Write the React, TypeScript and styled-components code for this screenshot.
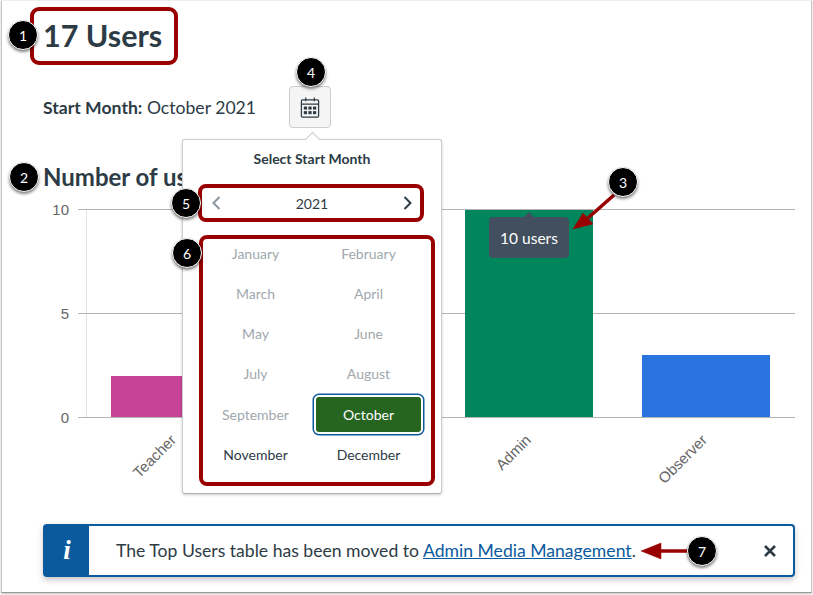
import React from 'react';
import styled, { createGlobalStyle } from 'styled-components';

const GlobalStyle = createGlobalStyle`
	html, body {
		margin: 0;
		padding: 0;
		background: #ffffff;
	}
	* {
		box-sizing: border-box;
	}
`;

const Page = styled.div`
	position: relative;
	width: 813px;
	height: 595px;
	overflow: hidden;
	background: #ffffff;
	color: #2d3b45;
	font-family: Lato, 'Noto Sans', sans-serif;
`;

const Frame = styled.div`
	width: 811px;
	height: 593px;
	margin-left: 1px;
	padding: 6px 16px 0 41px;
	border: 1px solid #c8c8c8;
	border-top-color: #ededed;
	border-bottom-color: #9a9a9a;
	background: #ffffff;
	box-shadow: 0 1px 2px rgba(0, 0, 0, 0.25);
`;

const TitleBox = styled.div`
	display: flex;
	align-items: center;
	width: 148px;
	height: 58px;
	margin-left: -13px;
	padding: 0 0 2px 9px;
	border: 4px solid #990000;
	border-radius: 9px;
`;

const Title = styled.h1`
	margin: 0;
	font-size: 30.5px;
	font-weight: 700;
	line-height: 40px;
	white-space: nowrap;
`;

const StartRow = styled.div`
	display: flex;
	align-items: center;
	gap: 33px;
	height: 42px;
	margin-top: 21px;
	font-size: 17.6px;
`;

const StartLabel = styled.div`
	white-space: nowrap;
	b {
		font-weight: 700;
	}
`;

const CalendarButton = styled.button`
	display: flex;
	align-items: center;
	justify-content: center;
	width: 42px;
	height: 42px;
	padding: 0;
	border: 1px solid #c7cdd1;
	border-radius: 4px;
	background: #f5f5f5;
	color: #2d3b45;
`;

const SubTitle = styled.h2`
	margin: 34px 0 0;
	font-size: 24px;
	font-weight: 700;
	line-height: 30px;
	white-space: nowrap;
`;

const ChartArea = styled.div`
	position: relative;
	width: 752px;
	height: 329px;
	margin-top: 3px;
`;

const ChartSvg = styled.svg`
	display: block;
`;

const Tooltip = styled.div`
	position: absolute;
	left: 446px;
	top: 22px;
	display: flex;
	align-items: center;
	justify-content: center;
	width: 80px;
	height: 41px;
	border-radius: 4px;
	background: #414f5e;
	color: #ffffff;
	font-size: 15.5px;

	&::before {
		content: '';
		position: absolute;
		left: 35px;
		top: -5px;
		border-left: 5px solid transparent;
		border-right: 5px solid transparent;
		border-bottom: 5px solid #414f5e;
	}
`;

const Alert = styled.div`
	display: flex;
	align-items: stretch;
	width: 752px;
	height: 53px;
	border: 2px solid #0b5a9e;
	border-radius: 4px;
	background: #ffffff;
	box-shadow: 0 3px 6px rgba(0, 0, 0, 0.22);
`;

const AlertIcon = styled.div`
	display: flex;
	align-items: center;
	justify-content: center;
	flex: 0 0 44px;
	background: #0b5a9e;
	color: #ffffff;
	font-family: 'Liberation Serif', serif;
	font-size: 27px;
	font-style: italic;
	font-weight: 700;
`;

const AlertBody = styled.div`
	flex: 1;
	display: flex;
	align-items: center;
	padding-left: 27px;
	font-size: 17.6px;
	white-space: nowrap;
`;

const AlertLink = styled.a`
	color: #0b5a9e;
	text-decoration: underline;
`;

const CloseButton = styled.div`
	display: flex;
	align-items: center;
	margin-right: 17px;
	color: #2d3b45;
`;

const Popover = styled.div`
	position: absolute;
	left: 182px;
	top: 139px;
	width: 260px;
	height: 355px;
	padding: 0 8px 0 15px;
	border: 1px solid #c7cdd1;
	border-bottom-color: #a9aeb2;
	border-radius: 3px;
	background: #ffffff;
	box-shadow: 0 1px 3px rgba(0, 0, 0, 0.2);

	&::before {
		content: '';
		position: absolute;
		left: 124px;
		top: -6px;
		width: 10px;
		height: 10px;
		border-left: 1px solid #c7cdd1;
		border-top: 1px solid #c7cdd1;
		background: #ffffff;
		transform: rotate(45deg);
	}
`;

const PopoverTitle = styled.div`
	position: relative;
	margin-right: 7px;
	padding-top: 9px;
	height: 44px;
	font-size: 14px;
	font-weight: 700;
	line-height: 20px;
	text-align: center;
`;

const YearNav = styled.div`
	display: flex;
	align-items: center;
	justify-content: space-between;
	width: 226px;
	height: 38px;
	padding: 0 8px 0 10px;
	border: 4px solid #990000;
	border-radius: 8px;
	font-size: 14px;
`;

const MonthGrid = styled.div`
	display: grid;
	grid-template-columns: 105px 105px;
	column-gap: 8px;
	grid-auto-rows: 28px;
	row-gap: 12.3px;
	align-items: center;
	justify-items: center;
	width: 236px;
	height: 251px;
	margin: 13px 0 0 1px;
	border: 4px solid #990000;
	border-radius: 8px;
`;

const Month = styled.div<{ $state: 'disabled' | 'enabled' | 'selected' }>`
	display: flex;
	align-items: center;
	justify-content: center;
	font-size: 14px;
	white-space: nowrap;
	color: ${(props) => (props.$state === 'disabled' ? '#a0a8ae' : props.$state === 'selected' ? '#ffffff' : '#2d3b45')};
	${(props) =>
		props.$state === 'selected' &&
		`
		width: 105px;
		height: 35px;
		flex: none;
		border-radius: 3px;
		background: #26651f;
		box-shadow: 0 0 0 2px #ffffff, 0 0 0 3.5px #0b5a9e;
	`}
`;

const Marker = styled.div<{ $x: number; $y: number }>`
	position: absolute;
	left: ${(props) => props.$x - 15}px;
	top: ${(props) => props.$y - 15}px;
	display: flex;
	align-items: center;
	justify-content: center;
	width: 30px;
	height: 30px;
	border: 1px solid #ffffff;
	border-radius: 50%;
	background: #000000;
	color: #ffffff;
	font-size: 14px;
	box-shadow: 0 2px 3px rgba(0, 0, 0, 0.5);
`;

const ArrowLayer = styled.svg`
	position: absolute;
	left: 0;
	top: 0;
	pointer-events: none;
`;

const months: { name: string; state: 'disabled' | 'enabled' | 'selected' }[] = [
	{ name: 'January', state: 'disabled' },
	{ name: 'February', state: 'disabled' },
	{ name: 'March', state: 'disabled' },
	{ name: 'April', state: 'disabled' },
	{ name: 'May', state: 'disabled' },
	{ name: 'June', state: 'disabled' },
	{ name: 'July', state: 'disabled' },
	{ name: 'August', state: 'disabled' },
	{ name: 'September', state: 'disabled' },
	{ name: 'October', state: 'selected' },
	{ name: 'November', state: 'enabled' },
	{ name: 'December', state: 'enabled' },
];

const bars = [
	{ label: 'Teacher', x: 111, y: 376, color: '#c64396', labelX: 177 },
	{ label: 'Admin', x: 465, y: 210, color: '#00865d', labelX: 532 },
	{ label: 'Observer', x: 642, y: 355, color: '#2a74e0', labelX: 708 },
];

const ticks = [
	{ label: '10', y: 209.5 },
	{ label: '5', y: 313.5 },
	{ label: '0', y: 417.5 },
];

const markers = [
	{ n: 1, x: 23, y: 35 },
	{ n: 2, x: 24, y: 177 },
	{ n: 3, x: 623, y: 182 },
	{ n: 4, x: 311, y: 72 },
	{ n: 5, x: 186, y: 203 },
	{ n: 6, x: 187, y: 253 },
	{ n: 7, x: 702, y: 551 },
];

const CalendarIcon = () => (
	<svg width='20' height='21' viewBox='0 0 20 22' fill='none' stroke='#2d3b45' strokeWidth='1.3'>
		<rect x='1' y='3' width='18' height='18' rx='1' />
		<path d='M1 7.5h18M5.5 0.5v4M14.5 0.5v4' />
		<g fill='#2d3b45' stroke='none'>
			<rect x='3.5' y='10' width='3.4' height='3.2' />
			<rect x='8.3' y='10' width='3.4' height='3.2' />
			<rect x='13.1' y='10' width='3.4' height='3.2' />
			<rect x='3.5' y='14.8' width='3.4' height='3.2' />
			<rect x='8.3' y='14.8' width='3.4' height='3.2' />
			<rect x='13.1' y='14.8' width='3.4' height='3.2' />
		</g>
	</svg>
);

const Chevron = ({ dir, color }: { dir: 'left' | 'right'; color: string }) => (
	<svg width='9' height='14' viewBox='0 0 9 14' fill='none' stroke={color} strokeWidth='2'>
		<path d={dir === 'left' ? 'M7.5 1 1.5 7l6 6' : 'M1.5 1l6 6-6 6'} />
	</svg>
);

const UsersChart = () => (
	<ChartSvg width='752' height='329' viewBox='43 195 752 329'>
		<line x1='86.5' y1='209' x2='86.5' y2='418' stroke='#dfe3e6' />
		{ticks.map((tick) => (
			<g key={tick.label}>
				<line x1='78' y1={tick.y} x2='795' y2={tick.y} stroke='#b4b4b4' />
				<text x='69' y={tick.y + 5} textAnchor='end' fontFamily='Liberation Sans, sans-serif' fontSize='15' fill='#666666'>
					{tick.label}
				</text>
			</g>
		))}
		{bars.map((bar) => (
			<g key={bar.label}>
				<rect x={bar.x} y={bar.y} width='128' height={417 - bar.y} fill={bar.color} />
				<text
					x={bar.labelX}
					y='441'
					textAnchor='end'
					transform={`rotate(-45 ${bar.labelX} 441)`}
					fontFamily='Liberation Sans, sans-serif'
					fontSize='15'
					fill='#666666'
				>
					{bar.label}
				</text>
			</g>
		))}
	</ChartSvg>
);

export default function App() {
	return (
		<Page>
			<GlobalStyle />
			<Frame>
				<TitleBox>
					<Title>17 Users</Title>
				</TitleBox>
				<StartRow>
					<StartLabel>
						<b>Start Month:</b> October 2021
					</StartLabel>
					<CalendarButton aria-label='Select start month'>
						<CalendarIcon />
					</CalendarButton>
				</StartRow>
				<SubTitle>Number of users</SubTitle>
				<ChartArea>
					<UsersChart />
					<Tooltip>10 users</Tooltip>
				</ChartArea>
				<Alert>
					<AlertIcon>i</AlertIcon>
					<AlertBody>
						<span>
							The Top Users table has been moved to <AlertLink href='#'>Admin Media Management</AlertLink>.
						</span>
					</AlertBody>
					<CloseButton>
						<svg width='12' height='12' viewBox='0 0 12 12' stroke='#2d3b45' strokeWidth='2.6'>
							<path d='M1 1l10 10M11 1 1 11' />
						</svg>
					</CloseButton>
				</Alert>
			</Frame>

			<Popover>
				<PopoverTitle>Select Start Month</PopoverTitle>
				<YearNav>
					<Chevron dir='left' color='#8b969e' />
					<span>2021</span>
					<Chevron dir='right' color='#2d3b45' />
				</YearNav>
				<MonthGrid>
					{months.map((month) => (
						<Month key={month.name} $state={month.state}>
							{month.name}
						</Month>
					))}
				</MonthGrid>
			</Popover>

			<ArrowLayer width='813' height='595' viewBox='0 0 813 595'>
				<g fill='#990000' stroke='#990000'>
					<path d='M614 195 588 218' strokeWidth='3.5' fill='none' />
					<path d='M573 229 583 213 593 224Z' strokeWidth='0.5' />
					<path d='M690 551H660' strokeWidth='3.5' fill='none' />
					<path d='M641 551 661 543V559Z' strokeWidth='0.5' />
				</g>
			</ArrowLayer>

			{markers.map((marker) => (
				<Marker key={marker.n} $x={marker.x} $y={marker.y}>
					{marker.n}
				</Marker>
			))}
		</Page>
	);
}
